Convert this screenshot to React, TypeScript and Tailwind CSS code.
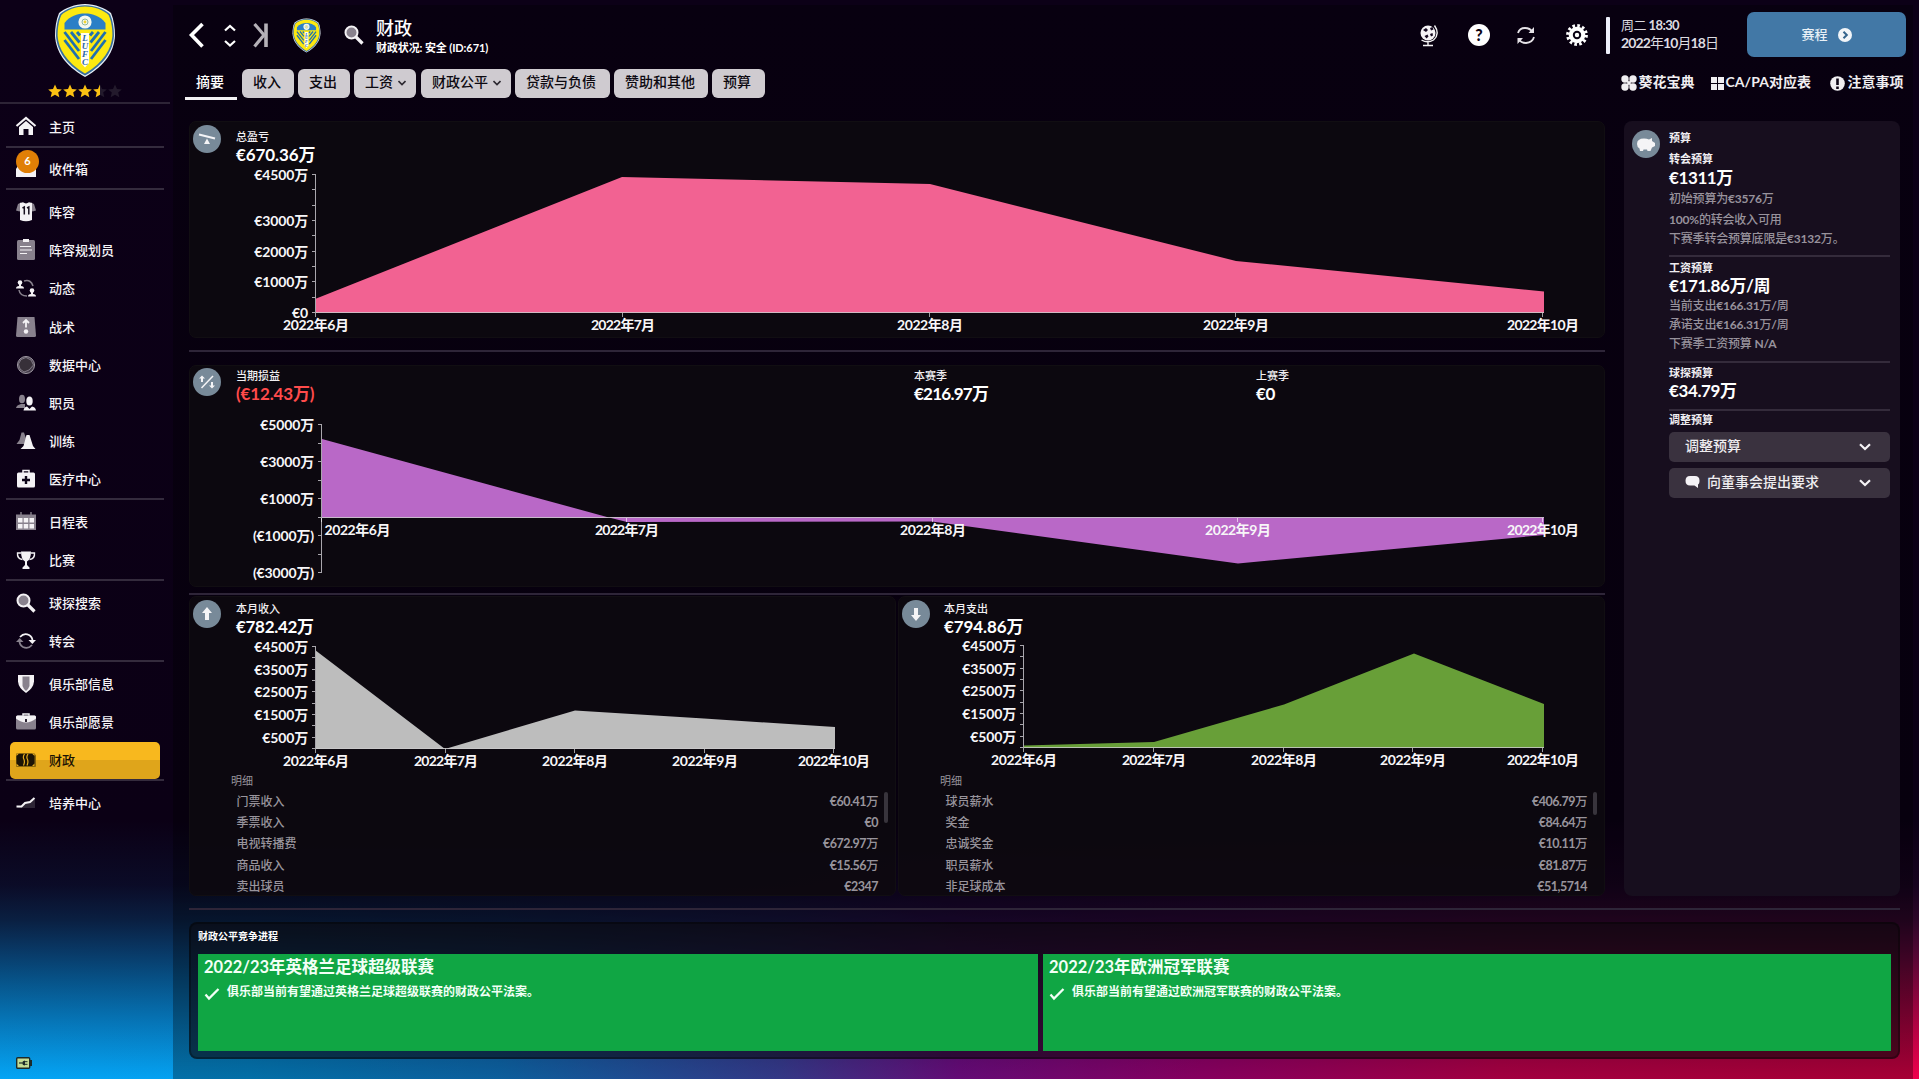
import React from 'react';

type Pt = [number, number];

function Crest({ className }: { className?: string }) {
  return (
    <svg className={className} viewBox="0 0 62 75" fill="none">
      <path d="M31 1 C41 1 51 5 57 10 C60 17 61 25 61 33 C60 48 52 62 31 74 C10 62 2 48 1 33 C1 25 2 17 5 10 C11 5 21 1 31 1Z" fill="#e9f1f8" />
      <path d="M31 2.2 C41 2.2 50 6 56 11 C59 18 60 25 60 33 C59 47 51 61 31 72.6 C11 61 3 47 2 33 C2 25 3 18 6 11 C12 6 21 2.2 31 2.2Z" fill="#3a6f9c" />
      <path d="M31 3.6 C40 3.6 49 7 54.6 12 C57.6 19 58.4 25 58.4 33 C57.4 46 50 59 31 70.6 C12 59 4.600 46 3.600 33 C3.600 25 4.400 19 7.400 12 C13 7 22 3.600 31 3.600Z" fill="#fde910" />
      <path d="M10.500 26.500 V20 C16 13 23 10.500 31 10.500 C39 10.500 46 13 51.500 20 V26.500Z" fill="#2a7fc6" />
      <circle cx="31" cy="19" r="6.600" fill="#f5f8ef" />
      <circle cx="31" cy="19" r="3" fill="none" stroke="#8fb79a" strokeWidth="1" />
      <circle cx="31" cy="19" r="1.400" fill="#f2d430" />
      <g stroke="#1f6fb0" strokeWidth="2.800">
        <path d="M10.500 29 L25 48" />
        <path d="M10.500 37 L25 56" />
        <path d="M17 29 L25.500 39.500" />
        <path d="M51.500 29 L37 48" />
        <path d="M51.500 37 L37 56" />
        <path d="M45 29 L36.500 39.500" />
        <path d="M23 29 L26 32.500" />
        <path d="M39 29 L36 32.500" />
      </g>
      <path d="M27 30 H35 V60 L31 64.500 L27 60Z" fill="#fffef2" />
      <g fill="#2563a8" fontFamily="Liberation Serif, serif" fontStyle="italic" fontWeight="700" fontSize="9" textAnchor="middle">
        <text x="31" y="37.500">L</text>
        <text x="31" y="45.500">U</text>
        <text x="31" y="53.500">F</text>
        <text x="31" y="61.500">C</text>
      </g>
    </svg>
  );
}

const W = '#f4f2f5';
const G = '#88818d';

const icons: Record<string, React.ReactNode> = {
  home: (
    <>
      <path d="M0.500 9 L10 1 L19.500 9" stroke={W} strokeWidth="2.200" fill="none" />
      <path d="M3 10 L10 4 L17 10 V18 H12.500 V12 H7.500 V18 H3Z" fill={W} />
    </>
  ),
  inbox: (
    <>
      <path d="M0 10 L3 5 H17 L20 10 V18 H0Z" fill={W} />
      <path d="M5 9 h10 v2 q-5 6 -10 0z" fill={G} />
    </>
  ),
  shirt: (
    <>
      <path d="M5 0.500 L2 2 L0 8.500 L3.500 9.500 L5 8Z M15 0.500 L18 2 L20 8.500 L16.500 9.500 L15 8Z" fill={G} />
      <path d="M4 1 L7 0.300 Q10 2.500 13 0.300 L16 1 V18 Q10 20.500 4 18Z" fill={W} />
      <path d="M6.500 6 L8.300 5 V12.500 M11 6 L12.800 5 V12.500" stroke="#17101f" strokeWidth="1.500" fill="none" />
    </>
  ),
  clipboard: (
    <>
      <rect x="1" y="0" width="18" height="20" rx="1.500" fill={G} />
      <rect x="7" y="-1" width="6" height="3" fill={W} />
      <path d="M4 6.500 H15 M4 10 H16 M4 13.500 H11" stroke={W} strokeWidth="1.200" />
    </>
  ),
  dynamics: (
    <>
      <path d="M8 3 Q15 1 17 8 M3 12 Q4 18 11 18" stroke={G} strokeWidth="1.500" fill="none" />
      <circle cx="4" cy="4.500" r="2.300" fill={W} />
      <path d="M3 6 H5 V8 Q8 8 8 10.500 H0 Q0 8 3 8Z" fill={W} />
      <circle cx="16" cy="12.500" r="2.300" fill={W} />
      <path d="M15 14 H17 V16 Q20 16 20 18.500 H12 Q12 16 15 16Z" fill={W} />
    </>
  ),
  tactics: (
    <>
      <path d="M1.500 0 H18.500 L20 18.500 Q20 20 18.500 20 H1.500 Q0 20 0 18.500Z" fill={G} />
      <path d="M10 10.500 V3.500 M7 6 L10 3 L13 6" stroke={W} strokeWidth="1.800" fill="none" />
      <circle cx="10" cy="14.500" r="2.200" fill={W} />
    </>
  ),
  data: (
    <>
      <circle cx="10" cy="10" r="8.500" fill="#453d4b" stroke="#a39da6" strokeWidth="1" />
      <path d="M10 2.500 L15 5 L17.500 10 L13 15 L8 17 L4 14 L2.500 9 L5 4.500Z" fill="#373039" stroke={G} strokeWidth="0.900" />
    </>
  ),
  staff: (
    <>
      <ellipse cx="6" cy="6" rx="3" ry="4.300" fill={G} />
      <path d="M0 15 Q0.500 12 5 11 H9 V15Z" fill={G} />
      <ellipse cx="13.500" cy="8" rx="3.200" ry="4.500" fill={W} />
      <path d="M7.500 17.500 Q8 14 11 13.500 L13.500 16 L16 13.500 Q19.500 14 20 17.500Z" fill={W} />
    </>
  ),
  training: (
    <>
      <path d="M5.500 1.500 H8 L12 13 H0.500 L3.500 9Z" fill={G} />
      <path d="M10.500 4 H13.500 L17 15 L19.500 18 H4.500 L7.500 15Z" fill={W} />
    </>
  ),
  medical: (
    <>
      <path d="M7 4 V1.500 H13 V4" stroke={W} strokeWidth="1.500" fill="none" />
      <rect x="1" y="3.500" width="18" height="15" rx="1.500" fill={W} />
      <path d="M10 7 V15 M6 11 H14" stroke="#0d0518" strokeWidth="2.400" />
    </>
  ),
  calendar: (
    <>
      <path d="M0 2.500 H20 V18 H0Z" fill={G} />
      <path d="M5 0 V4 M15 0 V4" stroke={G} strokeWidth="1.400" />
      <path d="M2 6 h4.500v4.500h-4.500z M7.700 6 h4.500v4.500h-4.500z M13.500 6 h4.500v4.500h-4.500z M2 12 h4.500v4.500h-4.500z M7.700 12 h4.500v4.500h-4.500z M13.500 12 h4.500v4.500h-4.500z" fill={W} />
    </>
  ),
  trophy: (
    <>
      <path d="M5 3 H1.500 Q1 9 6.500 9.500 M15 3 H18.500 Q19 9 13.500 9.500" stroke={W} strokeWidth="1.400" fill="none" />
      <path d="M5 1.500 H15 Q15 9.500 11 11.500 V15 L13.500 17.500 V19 H6.500 V17.500 L9 15 V11.500 Q5 9.500 5 1.500Z" fill={W} />
    </>
  ),
  search: (
    <>
      <circle cx="7.500" cy="7.500" r="6" fill={G} stroke={W} strokeWidth="2" />
      <path d="M12 12 L18.500 18.500" stroke={W} strokeWidth="3.200" />
    </>
  ),
  transfer: (
    <>
      <path d="M4 6 Q8 1.500 13 4 Q16.500 6 16.500 10" stroke={W} strokeWidth="1.800" fill="none" />
      <path d="M12.500 9 H20 L16.300 13Z" fill={W} />
      <path d="M16 14 Q12 18.500 7 16 Q3.500 14 3.500 10" stroke={G} strokeWidth="1.800" fill="none" />
      <path d="M0 11 H7.500 L3.700 7Z" fill={G} />
    </>
  ),
  shield: (
    <>
      <path d="M2 1 H18 V7.500 Q17.500 14 10 19 Q2.500 14 2 7.500Z" fill={W} />
      <path d="M6.500 2.500 H13.500 V12 Q12.500 15 10 17 Q7.500 15 6.500 12Z" fill={G} />
    </>
  ),
  briefcase: (
    <>
      <path d="M7 4 V2 H13 V4" stroke={W} strokeWidth="1.500" fill="none" />
      <rect x="0" y="3.500" width="20" height="14" rx="1.500" fill={G} />
      <path d="M0 5 Q0 3.500 1.500 3.500 H18.500 Q20 3.500 20 5 V6.500 Q15 10.500 10 10.500 Q5 10.500 0 6.500Z" fill={W} />
      <rect x="9" y="7" width="2" height="3" fill="#2a2230" />
    </>
  ),
  money: (
    <>
      <rect x="0" y="4.500" width="20" height="12.500" rx="1" fill="#8a680f" />
      <path d="M0.500 3.500 H18.500 V16 H0.500Z" fill="#1c1405" />
      <path d="M8.500 4 Q6.500 7 8 9.500 Q9 12 7.500 15.500 M12 4 Q10 7 11.500 9.500 Q12.500 12 11 15.500" stroke="#e9ad1c" strokeWidth="1.200" fill="none" />
      <path d="M0.500 3.500h2.500l-2.500 2.500zM18.500 3.500v2.500l-2.500-2.500zM0.500 16v-2.500l2.500 2.500zM18.500 16h-2.500l2.500-2.500z" fill="#e9ad1c" />
    </>
  ),
  growth: (
    <>
      <path d="M0 14 L6 13.500 L10 10 L19 6.500 V15 H3Z" fill="#453d4b" opacity="0.600" />
      <path d="M0.500 13.500 H5.500 L9 10 L14 9 L18.500 5" stroke={W} strokeWidth="2" fill="none" />
    </>
  ),
};

function Glyph({ name, className }: { name: string; className?: string }) {
  return (
    <svg viewBox="0 0 20 20" className={className ?? 'h-5 w-5 overflow-visible'}>
      {icons[name]}
    </svg>
  );
}

/** Sets the Latin and numeric runs of a mixed string in bold, and the Chinese in the inherited weight. */
function Mixed({ text }: { text: string }) {
  return (
    <span>
      {text.split(/([!-~€]+)/).map((part, i) =>
        i % 2 ? (
          <span key={i} className="font-bold">
            {part}
          </span>
        ) : (
          part
        ),
      )}
    </span>
  );
}

const menu: { h: string; items: [string, string][] }[] = [
  { h: 'h-[42px] pt-[4px]', items: [['home', '主页']] },
  { h: 'h-[40px] pt-[2px]', items: [['inbox', '收件箱']] },
  {
    h: 'h-[308px] pt-[3px]',
    items: [
      ['shirt', '阵容'],
      ['clipboard', '阵容规划员'],
      ['dynamics', '动态'],
      ['tactics', '战术'],
      ['data', '数据中心'],
      ['staff', '职员'],
      ['training', '训练'],
      ['medical', '医疗中心'],
    ],
  },
  { h: 'h-[79px] pt-[3px]', items: [['calendar', '日程表'], ['trophy', '比赛']] },
  { h: 'h-[79px] pt-[3px]', items: [['search', '球探搜索'], ['transfer', '转会']] },
  { h: 'h-[117px] pt-[3px]', items: [['shield', '俱乐部信息'], ['briefcase', '俱乐部愿景'], ['money', '财政']] },
  { h: 'h-[42px] pt-[3px]', items: [['growth', '培养中心']] },
];

const STAR = 'M7 0.500 L9 5 L13.800 5.400 L10.200 8.600 L11.300 13.300 L7 10.800 L2.700 13.300 L3.800 8.600 L0.200 5.400 L5 5Z';

function Sidebar() {
  return (
    <aside className="flex h-full w-[173px] shrink-0 flex-col">
      <div className="flex h-[102px] w-[170px] flex-col items-center pt-[3px]">
        <Crest className="h-[75px] w-[62px]" />
        <div className="mt-[6px] flex h-[14px] gap-[1px]">
          {[1, 1, 1, 0.5, 0].map((v, i) => (
            <svg key={i} viewBox="0 0 14 14" className="h-[14px] w-[14px]">
              <path d={STAR} fill={v === 1 ? '#fbc112' : '#231a2c'} />
              {v === 0.5 && <path d="M7 0.500 V10.800 L2.700 13.300 L3.800 8.600 L0.200 5.400 L5 5Z" fill="#fbc112" />}
            </svg>
          ))}
        </div>
      </div>
      <div className="h-[2px] w-[170px] bg-[#2d2436]" />
      {menu.map((g, gi) => (
        <React.Fragment key={gi}>
          {gi > 0 && <div className="ml-[6px] h-[2px] w-[158px] shrink-0 bg-[#342b3d]" />}
          <div className={`flex shrink-0 flex-col ${g.h}`}>
            {g.items.map(([icon, label]) => {
              const on = icon === 'money';
              return (
                <div
                  key={label}
                  className={`relative ml-[10px] flex w-[150px] shrink-0 items-center pl-[6px] ${
                    on
                      ? 'my-[1px] h-[36.200px] rounded-[5px] bg-[linear-gradient(to_bottom,#f8b81e_48%,#dfa51b_48%)] text-[#1a1204]'
                      : 'h-[38.200px] text-[#f5f3f6]'
                  }`}
                >
                  <Glyph name={icon} />
                  <span className="ml-[13px] text-[13px] leading-[18px] font-medium">{label}</span>
                  {icon === 'inbox' && (
                    <span className="absolute top-0 left-[6px] flex h-[23px] w-[23px] items-center justify-center rounded-full bg-[#e07f06] pb-px text-[11px] font-bold text-white">
                      6
                    </span>
                  )}
                </div>
              );
            })}
          </div>
        </React.Fragment>
      ))}
      <svg viewBox="0 0 17 12" className="mt-auto mb-[10px] ml-4 h-3 w-[17px]">
        <rect x="0.700" y="0.700" width="13" height="10.500" rx="1" fill="#c5dc95" stroke="#1c2a2a" strokeWidth="1.400" />
        <path d="M14 3 h2 v6 h-2z" fill="#1c2a2a" />
        <path d="M3 6 H6" stroke="#1c2a2a" strokeWidth="1.200" />
        <path d="M6 6 Q6.500 3.500 9 3.500 V8.500 Q6.500 8.500 6 6Z" fill="#1c2a2a" />
        <path d="M9 4.700 h2.500 M9 7.300 h2.500" stroke="#1c2a2a" strokeWidth="1" />
      </svg>
    </aside>
  );
}

const tabs: [string, string, boolean?][] = [
  ['收入', 'w-[52px] mr-[4px]'],
  ['支出', 'w-[52px] mr-[4px]'],
  ['工资', 'w-[52px] mr-[5px]', true],
  ['财政公平', 'w-[90px] mr-[4px]', true],
  ['贷款与负债', 'w-[95px] mr-[4px]'],
  ['赞助和其他', 'w-[94px] mr-[4px]'],
  ['预算', 'w-[53px]'],
];

function Header() {
  return (
    <header className="h-[116px] pl-[12px]">
      <div className="flex h-[64px]">
        <svg viewBox="185 5 90 60" className="mt-0 h-[60px] w-[90px] shrink-0" fill="none" strokeWidth="3.600">
          <path d="M202.500 24 L191.500 35 L202.500 46.500" stroke="#fff" strokeWidth="3.600" />
          <path d="M225 30.500 L230 26 L235 30.500 M225 41 L230 45.500 L235 41" stroke="#fff" strokeWidth="2.200" />
          <path d="M254.500 24 L264 35 L254.500 46.500" stroke="#b5b1b8" strokeWidth="3.200" />
          <path d="M266 23.500 V47" stroke="#b5b1b8" />
        </svg>
        <Crest className="mt-[13px] ml-[17px] h-[35px] w-[29px] shrink-0" />
        <Glyph name="search" className="mt-[20px] ml-[23px] h-5 w-5 shrink-0" />
        <div className="ml-[12px] flex flex-col pt-[12px]">
          <div className="h-[23px] text-[18px] leading-[23px] font-medium text-white">财政</div>
          <div className="h-[16px] text-[11px] leading-[16px] font-bold tracking-[-0.100px] whitespace-nowrap text-white">
            财政状况: 安全 (ID:671)
          </div>
        </div>
        <div className="ml-auto flex">
          <svg viewBox="1415 5 180 60" className="h-[60px] w-[180px]" fill="none">
            <circle cx="1428" cy="33" r="7.500" fill="#f5f3f6" />
            <path d="M1423 30 l3 -2 2 2 -2 2z M1430 28 l2.500 -1 1 2.500 -2.500 1z M1424.500 36 l3 -1.500 1 2 -2 2z M1430 34 l2.500 -1 0.500 2.500 -2 1z" fill="#14081f" />
            <path d="M1434.500 25.500 Q1440.500 34 1433.500 40 Q1427.500 43.500 1421.500 40 M1428 41 V45 M1423 45.500 H1433" stroke="#f5f3f6" strokeWidth="1.400" />
            <circle cx="1479" cy="35" r="11" fill="#fff" />
            <text x="1479" y="40.500" fill="#0b0314" fontSize="16" fontWeight="900" textAnchor="middle">?</text>
            <path d="M1518 33 Q1519.500 28 1525 28 Q1530 28 1532.500 32 M1534 37 Q1532.500 42.500 1526 43 Q1521 43 1518.500 39" stroke="#e5e2e7" strokeWidth="1.800" />
            <path d="M1534 27 V33 H1528.500Z M1517.500 44 V38 H1523Z" fill="#e5e2e7" />
            <circle cx="1577" cy="35" r="9.300" fill="none" stroke="#fff" strokeWidth="3.200" strokeDasharray="2.600 2.270" />
            <circle cx="1577" cy="35" r="8.300" fill="#fff" />
            <circle cx="1577" cy="35" r="3.200" fill="#fff" stroke="#0b0314" strokeWidth="2" />
          </svg>
          <div className="mt-[12px] ml-[11px] h-[37px] w-[4px] rounded-[1px] bg-[#eef0fb]" />
          <div className="ml-[11px] flex w-[126px] flex-col pt-[10.500px] whitespace-nowrap text-[#dddbe0]">
            <div className="h-[18px] text-[13px] leading-[18px] tracking-[-0.600px]">
              <Mixed text="周二 18:30" />
            </div>
            <div className="h-[18px] text-[14px] leading-[18px] tracking-[-0.900px]">
              <Mixed text="2022年10月18日" />
            </div>
          </div>
          <button className="mt-[7px] mr-[7px] flex h-[45px] w-[159px] items-center justify-center gap-[10px] rounded-[7px] bg-[#4278a6] text-[13px] font-medium text-[#e9f1f7]">
            赛程
            <svg viewBox="0 0 14 14" className="h-[14px] w-[14px]">
              <circle cx="7" cy="7" r="7" fill="#f2f5f8" />
              <path d="M5.500 3.800 L8.800 7 L5.500 10.200" stroke="#34648c" strokeWidth="2" fill="none" />
            </svg>
          </button>
        </div>
      </div>
      <nav className="flex h-[31px] items-start text-[14px] font-medium">
        <div className="mr-[5px] flex h-[31px] w-[52px] justify-center border-b-[3px] border-[#f2f1f3] pt-[3px] pr-[2px] leading-[20px] text-white">
          摘要
        </div>
        {tabs.map(([label, cls, drop]) => (
          <button
            key={label}
            className={`flex h-[29px] shrink-0 items-center rounded-[6px] bg-[#cfcbd0] pb-[4px] pl-[11px] text-[14px] leading-[20px] whitespace-nowrap text-[#0c0910] ${
              label === '工资' ? 'mr-[5px] w-[62px]' : cls
            }`}
          >
            {label}
            {drop && (
              <svg viewBox="0 0 8 6" className="mt-[2px] ml-[5px] h-[6px] w-[8px]">
                <path d="M0.500 1 L4 4.500 L7.500 1" stroke="#2c2830" strokeWidth="1.600" fill="none" />
              </svg>
            )}
          </button>
        ))}
        <div className="ml-auto flex h-[28px] items-center pr-[9.500px] text-[14px] leading-[20px] font-bold whitespace-nowrap text-[#f0eef1]">
          <svg viewBox="0 0 16 16" className="mr-[2px] h-[16px] w-[16px]" fill="#f0eef1">
            <circle cx="4" cy="4" r="3.700" />
            <circle cx="12" cy="4" r="3.700" />
            <circle cx="4" cy="12" r="3.700" />
            <circle cx="12" cy="12" r="3.700" />
            <path d="M5 6.500 L6.500 5 L11 9.500 L9.500 11Z M9.500 5 L11 6.500 L6.500 11 L5 9.500Z" />
          </svg>
          <span className="w-[72px] -translate-y-px">葵花宝典</span>
          <svg viewBox="0 0 13 13" className="mr-[2px] h-[13px] w-[13px]" fill="#f0eef1">
            <path d="M0 0h6v6h-6zM7 0h6v6h-6zM0 7h6v6h-6zM7 7h6v6h-6z" />
          </svg>
          <span className="w-[104px] -translate-y-px tracking-[0.050px]">CA/PA对应表</span>
          <svg viewBox="0 0 15 15" className="mr-[3px] h-[15px] w-[15px]">
            <circle cx="7.500" cy="7.500" r="7.300" fill="#f0eef1" />
            <path d="M7.500 2.500 V9 M7.500 10.500 V13" stroke="#0c0415" strokeWidth="2.600" />
          </svg>
          <span className="-translate-y-px">注意事项</span>
        </div>
      </nav>
    </header>
  );
}

function Badge({ children }: { children: React.ReactNode }) {
  return (
    <svg viewBox="0 0 28 28" className="h-[28px] w-[28px] shrink-0">
      <circle cx="14" cy="14" r="14" fill="#788a99" />
      {children}
    </svg>
  );
}

function Metric({ label, value, red, className, track }: { label: string; value: string; red?: boolean; className?: string; track?: string }) {
  return (
    <div className={`flex flex-col whitespace-nowrap ${className ?? ''}`}>
      <div className="h-[17px] text-[11px] leading-[17px] font-medium text-[#f1eff2]">{label}</div>
      <div className={`h-[20px] text-[17px] leading-[20px] font-bold ${track ?? 'tracking-[-0.300px]'} ${red ? 'text-[#ff4b4b]' : 'text-white'}`}>
        {value}
      </div>
    </div>
  );
}

interface ChartProps {
  box: [number, number, number, number];
  fill: string;
  points: Pt[];
  axisX: number;
  baseY: number;
  top: number;
  bottom: number;
  ticks: number;
  labelRight: number;
  yLabels: [string, number][];
  xs: number[];
  xLabelY: number;
  firstLeft?: boolean;
}

const months = ['2022年6月', '2022年7月', '2022年8月', '2022年9月', '2022年10月'];
const monthWidths = [66, 64, 66, 66, 72];

function AreaChart(p: ChartProps) {
  const step = (p.bottom - p.top) / p.ticks;
  const first = p.points[0];
  const last = p.points[p.points.length - 1];
  const d = `M${first[0]} ${p.baseY} ` + p.points.map(([x, y]) => `L${x} ${y}`).join(' ') + ` L${last[0]} ${p.baseY}Z`;
  return (
    <svg
      viewBox={p.box.join(' ')}
      width={p.box[2]}
      height={p.box[3]}
      className="block shrink-0 [font-family:'Lato','Noto_Sans_CJK_SC',sans-serif] text-[14px] font-bold"
    >
      <path d={d} fill={p.fill} />
      <g stroke="#a9a6ac" strokeWidth="1" shapeRendering="crispEdges">
        <path d={`M${p.axisX} ${p.top} V${p.bottom + 1}`} />
        {Array.from({ length: p.ticks + 1 }, (_, i) => (
          <path key={i} d={`M${p.axisX - 3.5} ${Math.round(p.top + i * step) + 0.5} H${p.axisX}`} />
        ))}
        <path d={`M${p.axisX} ${p.baseY} H${last[0]}`} stroke="#ffffff" strokeOpacity="0.650" />
        {p.xs.map((x, i) => (
          <path key={i} d={`M${x} ${p.baseY} v4`} stroke="#ffffff" strokeOpacity="0.600" />
        ))}
      </g>
      <g fill="#f7f6f8">
        {p.yLabels.map(([t, y]) => (
          <text key={t} x={p.labelRight} y={y + 5} textAnchor="end" letterSpacing="-0.150">
            {t}
          </text>
        ))}
        {months.map((m, i) => (
          <text
            key={m}
            x={i === 0 && p.firstLeft ? p.axisX + 3 : p.xs[i] - monthWidths[i] / 2 + 0.5}
            y={p.xLabelY + 5}
            textLength={monthWidths[i]}
          >
            {m}
          </text>
        ))}
      </g>
    </svg>
  );
}

function Rule() {
  return <div className="h-[2px] shrink-0 bg-[#2e2538]" />;
}

const panel = 'shrink-0 rounded-[7px] bg-[#0d0910]/90 border border-[#110e12]';

function Breakdown({ rows, thumb }: { rows: [string, string][]; thumb: string }) {
  return (
    <div className="relative flex flex-col pl-[41px] text-[#98949c]">
      <div className="h-[21px] text-[11px] leading-[21px]">明细</div>
      {rows.map(([a, b]) => (
        <div key={a} className="flex h-[21.200px] w-[647px] shrink-0 items-center justify-between pl-[5.500px] text-[12px] leading-[21px] font-medium">
          <span>{a}</span>
          <span className="text-[12.500px] tracking-[-0.500px]">
            <Mixed text={b} />
          </span>
        </div>
      ))}
      <div className={`absolute top-[22px] left-[694px] w-[4px] rounded-full bg-[#38343c] ${thumb}`} />
    </div>
  );
}

function BudgetPanel() {
  const label = 'text-[11px] leading-[18px] h-[18px] font-bold text-[#efedf1] shrink-0';
  const value = 'text-[17px] leading-[20px] h-[20px] font-bold text-white shrink-0 tracking-[-0.400px]';
  const note = 'text-[12px] leading-[20px] h-[20px] text-[#98929c] font-medium shrink-0 tracking-[-0.200px]';
  const rule = 'h-[2px] w-[221px] shrink-0 bg-[#342b3b]';
  const button = 'flex h-[30px] w-[221px] shrink-0 items-center rounded-[5px] bg-[#3a323f] pl-[16px] pr-[19px] pb-[2px] text-[14px] leading-[20px] font-medium text-[#efedf0]';
  const chevron = (
    <svg viewBox="0 0 12 8" className="mt-[2px] ml-auto h-[8px] w-[12px]">
      <path d="M1 1.200 L6 6 L11 1.200" stroke="#f5f3f6" strokeWidth="2.200" fill="none" />
    </svg>
  );
  return (
    <section className="flex h-[775px] w-[276px] shrink-0 rounded-[8px] bg-[#170e1e] pt-[9px] pl-[8px]">
      <div className="pt-0">
        <Badge>
          <path d="M5 14 Q5 8.500 12 8.500 Q15 8.500 17 9.500 L20 8 L20 11 L23 13 V16 L20 17.500 L18.500 21 H15.500 L15 19.500 H11.500 L11 21 H8 L7.500 18.500 Q5 17 5 14Z" fill="#f4f4f6" />
        </Badge>
      </div>
      <div className="-mt-[1px] ml-[9px] flex flex-col whitespace-nowrap">
        <div className={label}>预算</div>
        <div className={`${label} mt-[3px]`}>转会预算</div>
        <div className={value}>€1311万</div>
        <div className={`${note} mt-[1px]`}><Mixed text="初始预算为€3576万" /></div>
        <div className={`${note} mt-[1px]`}><Mixed text="100%的转会收入可用" /></div>
        <div className={`${note} -mt-[1px]`}><Mixed text="下赛季转会预算底限是€3132万。" /></div>
        <div className={`${rule} mt-[6px]`} />
        <div className={`${label} mt-[2px]`}>工资预算</div>
        <div className={`${value} -mt-[1px]`}>€171.86万/周</div>
        <div className={note}><Mixed text="当前支出€166.31万/周" /></div>
        <div className={`${note} -mt-[1px]`}><Mixed text="承诺支出€166.31万/周" /></div>
        <div className={`${note} -mt-[1px]`}><Mixed text="下赛季工资预算 N/A" /></div>
        <div className={`${rule} mt-[7px]`} />
        <div className={`${label} mt-[1px]`}>球探预算</div>
        <div className={`${value} -mt-[1px]`}>€34.79万</div>
        <div className={`${rule} mt-[8px]`} />
        <div className={label}>调整预算</div>
        <div className={`${button} mt-[3px]`}>
          调整预算
          {chevron}
        </div>
        <div className={`${button} mt-[6px]`}>
          <svg viewBox="0 0 15 12" className="mr-[7px] h-[12px] w-[15px]">
            <path d="M5 0 H10 Q14.500 0 14.500 4.500 Q14.500 8 13 8.500 L13 12 L9.500 9.500 H5 Q0.500 9.500 0.500 4.800 Q0.500 0 5 0Z" fill="#f5f3f6" />
          </svg>
          向董事会提出要求
          {chevron}
        </div>
      </div>
    </section>
  );
}

function FairPlay({ title, text, className }: { title: string; text: string; className: string }) {
  return (
    <div className={`flex h-[97px] flex-col bg-[#10a644] pt-[2px] pl-[6px] whitespace-nowrap text-[#f2fff6] ${className}`}>
      <div className="h-[22px] text-[16.500px] leading-[22px] font-bold">{title}</div>
      <div className="mt-[4px] flex h-[20px] items-center text-[12px] leading-[20px] font-bold">
        <svg viewBox="0 0 16 14" className="mt-1 mr-[7px] h-[14px] w-[16px]">
          <path d="M1.500 7.500 L5 11.500 L14.500 2" stroke="#f2fff6" strokeWidth="2.300" fill="none" />
        </svg>
        {text}
      </div>
    </div>
  );
}

const incomeLabels = (o: number): [string, number][] => [
  ['€4500万', 647 - o],
  ['€3500万', 670 - o],
  ['€2500万', 692 - o],
  ['€1500万', 715 - o],
  ['€500万', 738 - o],
];

export default function App() {
  return (
    <div className="flex h-[1079px] w-[1919px] overflow-hidden bg-[linear-gradient(to_bottom,#0c0017_0px,#0b0015_820px,rgba(11,3,28,0.950)_885px,rgba(11,8,34,0.850)_920px,rgba(10,10,40,0.700)_950px,rgba(8,10,40,0.500)_985px,rgba(8,8,40,0.280)_1025px,rgba(8,8,40,0)_1079px),linear-gradient(to_right,#05a5f5_0px,#05a0f0_250px,#1288e0_500px,#4a50c0_780px,#9010a8_960px,#c00088_1200px,#e8005c_1500px,#f0004c_1919px)] [font-family:'Lato','Noto_Sans_CJK_SC',sans-serif]">
      <Sidebar />
      <main className="mt-[5px] flex h-[1074px] w-[1740px] flex-col bg-black/30">
        <Header />
        <div className="flex h-[775px] shrink-0 pl-[16px]">
          <div className="flex h-[775px] w-[1416px] flex-col">
            <section className={`${panel} h-[217px]`}>
              <div className="flex h-[42px] pt-[3px] pl-[3px]">
                <Badge>
                  <path d="M6 9.500 L22 13.500" stroke="#f4f4f6" strokeWidth="2" />
                  <path d="M14 13.500 L17 19 H11Z" fill="#f4f4f6" />
                </Badge>
                <Metric className="mt-[3px] ml-[15px]" label="总盈亏" value="€670.36万" track="tracking-[-0.100px]" />
              </div>
              <AreaChart
                box={[190, 164, 1414, 172]}
                fill="#f26292"
                points={[[315, 299], [622, 177], [930, 184], [1236, 261], [1544, 291.500]]}
                axisX={315.500}
                baseY={312.500}
                top={174}
                bottom={312}
                ticks={9}
                labelRight={308}
                yLabels={[['€4500万', 175], ['€3000万', 221], ['€2000万', 252], ['€1000万', 282], ['€0', 313]]}
                xs={[315.500, 622.500, 929.500, 1235.500, 1542.500]}
                xLabelY={325}
              />
            </section>
            <div className="mt-[12px]"><Rule /></div>
            <section className={`${panel} mt-[13px] h-[222px]`}>
              <div className="flex h-[42px] pt-[2px] pl-[3px]">
                <Badge>
                  <path d="M8.500 20 L20 8" stroke="#f4f4f6" strokeWidth="1.500" />
                  <path d="M9 7.500 L12 10.500 H10 V14 H8 V10.500 H6Z M19 20.500 L16 17.500 H18 V14 H20 V17.500 H22Z" fill="#f4f4f6" />
                </Badge>
                <Metric className="-mt-[1px] ml-[15px] w-[678px]" label="当期损益" value="(€12.43万)" track="tracking-[-0.150px]" red />
                <Metric className="-mt-[1px] w-[342px]" label="本赛季" value="€216.97万" track="tracking-[-0.750px]" />
                <Metric className="-mt-[1px]" label="上赛季" value="€0" />
              </div>
              <AreaChart
                box={[190, 408, 1414, 178]}
                fill="#b968c7"
                points={[[322, 439], [607, 517], [627, 522], [932, 521.500], [1238, 563.500], [1544, 535]]}
                axisX={321.500}
                baseY={517.500}
                top={424}
                bottom={572}
                ticks={8}
                labelRight={314}
                yLabels={[['€5000万', 425], ['€3000万', 462], ['€1000万', 499], ['(€1000万)', 536], ['(€3000万)', 573]]}
                xs={[321.500, 626.500, 932.500, 1237.500, 1542.500]}
                xLabelY={530}
                firstLeft
              />
            </section>
            <div className="mt-[6px]"><Rule /></div>
            <div className="mt-[1px] flex h-[300px] gap-[2px]">
              <section className={`${panel} h-[300px] w-[707px]`}>
                <div className="flex h-[40px] pt-[3px] pl-[3px]">
                  <Badge>
                    <path d="M14 7 L19 13 H16 V20 H12 V13 H9Z" fill="#f4f4f6" />
                  </Badge>
                  <Metric className="ml-[15px]" label="本月收入" value="€782.42万" />
                </div>
                <AreaChart
                  box={[190, 637, 705, 133]}
                  fill="#bdbdbd"
                  points={[[315, 650], [445, 749], [575, 710.500], [704, 718.500], [835, 727]]}
                  axisX={315.500}
                  baseY={748.500}
                  top={646}
                  bottom={748}
                  ticks={9}
                  labelRight={308}
                  yLabels={incomeLabels(0)}
                  xs={[315.500, 445.500, 574.500, 704.500, 833.500]}
                  xLabelY={761}
                />
                <Breakdown
                  thumb="h-[31px]"
                  rows={[['门票收入', '€60.41万'], ['季票收入', '€0'], ['电视转播费', '€672.97万'], ['商品收入', '€15.56万'], ['卖出球员', '€2347']]}
                />
              </section>
              <section className={`${panel} h-[300px] w-[707px]`}>
                <div className="flex h-[40px] pt-[3px] pl-[3px]">
                  <Badge>
                    <path d="M14 21 L19 15 H16 V8 H12 V15 H9Z" fill="#f4f4f6" />
                  </Badge>
                  <Metric className="ml-[14px]" label="本月支出" value="€794.86万" track="tracking-[-0.100px]" />
                </div>
                <AreaChart
                  box={[899, 637, 705, 133]}
                  fill="#689f38"
                  points={[[1024, 745.500], [1154, 742], [1284, 704.500], [1414, 653.500], [1544, 704]]}
                  axisX={1023.500}
                  baseY={747.500}
                  top={645}
                  bottom={747}
                  ticks={9}
                  labelRight={1016}
                  yLabels={incomeLabels(1)}
                  xs={[1023.500, 1153.500, 1283.500, 1412.500, 1542.500]}
                  xLabelY={760}
                />
                <Breakdown
                  thumb="h-[23px]"
                  rows={[['球员薪水', '€406.79万'], ['奖金', '€84.64万'], ['忠诚奖金', '€10.11万'], ['职员薪水', '€81.87万'], ['非足球成本', '€51,5714']]}
                />
              </section>
            </div>
          </div>
          <div className="ml-[19px]">
            <BudgetPanel />
          </div>
        </div>
        <div className="ml-[16px] flex w-[1711px] flex-col pt-[12px]">
          <Rule />
          <section className="mt-[12px] flex h-[137px] flex-col rounded-[8px] border-2 border-black/30 bg-[#0c0a0c]/55 px-[7px] pt-[4px]">
            <div className="h-[17px] text-[10px] leading-[17px] font-bold text-white">财政公平竞争进程</div>
            <div className="mt-[9px] flex gap-[5px]">
              <FairPlay
                className="w-[840px]"
                title="2022/23年英格兰足球超级联赛"
                text="俱乐部当前有望通过英格兰足球超级联赛的财政公平法案。"
              />
              <FairPlay className="w-[848px]" title="2022/23年欧洲冠军联赛" text="俱乐部当前有望通过欧洲冠军联赛的财政公平法案。" />
            </div>
          </section>
        </div>
      </main>
    </div>
  );
}
